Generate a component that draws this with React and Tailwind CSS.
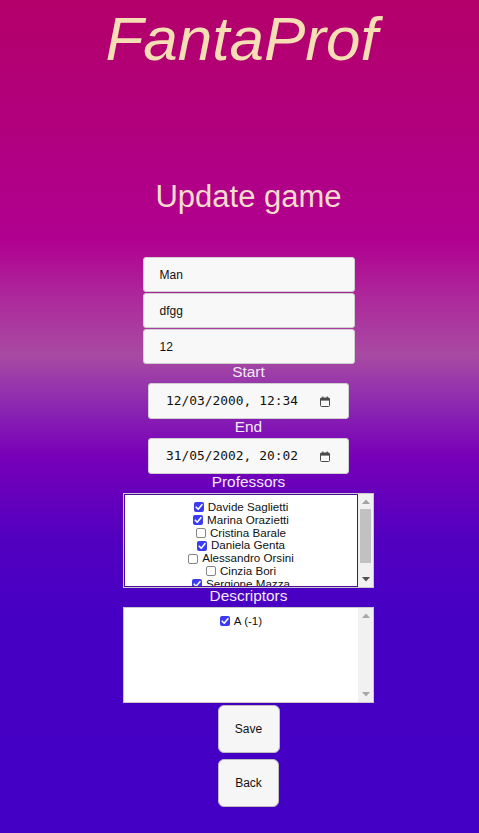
import React from "react";

const professors = [
  { name: "Davide Saglietti", checked: true },
  { name: "Marina Orazietti", checked: true },
  { name: "Cristina Barale", checked: false },
  { name: "Daniela Genta", checked: true },
  { name: "Alessandro Orsini", checked: false },
  { name: "Cinzia Bori", checked: false },
  { name: "Sergione Mazza", checked: true },
];

function Check({ checked }) {
  if (checked) {
    return (
      <span className="inline-flex w-[10px] h-[10px] rounded-[2px] bg-[#3b3bf2] items-center justify-center mr-[4px] shrink-0">
        <svg width="10" height="10" viewBox="0 0 10 10">
          <path d="M2.2 5.2 L4.2 7.2 L7.9 2.7" fill="none" stroke="#fff" strokeWidth="1.6" strokeLinecap="round" strokeLinejoin="round" />
        </svg>
      </span>
    );
  }
  return <span className="inline-block w-[10px] h-[10px] rounded-[2px] border border-[#858585] bg-white mr-[4px] shrink-0" />;
}

function Row({ name, checked }) {
  return (
    <div className="flex items-center justify-center h-[12.8px] text-[11.6px] leading-[12.8px] text-[#111]">
      <Check checked={checked} />
      <span>{name}</span>
    </div>
  );
}

function Arrow({ up, color }) {
  return (
    <svg width="8" height="5" viewBox="0 0 8 5">
      {up ? <path d="M0 5 L4 0.5 L8 5 Z" fill={color} /> : <path d="M0 0 L8 0 L4 4.5 Z" fill={color} />}
    </svg>
  );
}

function Scrollbar({ thumb, upColor, downColor }) {
  return (
    <div className="w-[15px] shrink-0 bg-[#f1f1f1] flex flex-col items-center">
      <div className="h-[15px] flex items-center justify-center">
        <Arrow up color={upColor} />
      </div>
      <div className="flex-1 w-full px-[2px]">
        {thumb && <div className="w-full h-[54px] bg-[#c1c1c1]" />}
      </div>
      <div className="h-[15px] flex items-center justify-center">
        <Arrow color={downColor} />
      </div>
    </div>
  );
}

function CalendarIcon() {
  return (
    <svg width="10" height="11" viewBox="0 0 10 11">
      <rect x="0.5" y="2" width="9" height="8.5" rx="1" fill="none" stroke="#4a4a4a" strokeWidth="1" />
      <rect x="0.5" y="2" width="9" height="2.6" fill="#4a4a4a" />
      <rect x="2.2" y="0.5" width="1.2" height="2" fill="#4a4a4a" />
      <rect x="6.6" y="0.5" width="1.2" height="2" fill="#4a4a4a" />
    </svg>
  );
}

function DateField({ value }) {
  return (
    <div className="w-[201px] h-[36px] mt-[3px] bg-[#f8f8f8] border border-[#cfcfcf] rounded-[3px] flex items-center pl-[17px] pr-[18px]">
      <span className="font-['DejaVu_Sans_Mono',monospace] text-[12.9px] text-[#111] flex-1 whitespace-pre">{value}</span>
      <CalendarIcon />
    </div>
  );
}

function TextField({ value, first }) {
  return (
    <div className={`w-[212px] h-[35px] ${first ? "" : "mt-[1px]"} bg-[#f8f8f8] border border-[#cfcfcf] rounded-[3px] flex items-center px-4 text-[12px] text-[#111]`}>
      {value}
    </div>
  );
}

function Label({ children }) {
  return <div className="text-[15.4px] leading-[16px] h-[16px] text-[#f4e9f6]">{children}</div>;
}

export default function App() {
  return (
    <div className="min-h-screen w-full font-['Liberation_Sans',Arial,sans-serif] bg-[linear-gradient(to_bottom,#b3006a_0px,#b00090_240px,#ad2a9c_300px,#a84aa2_355px,#8e2cb0_400px,#7800b8_455px,#5200c0_540px,#4600c4_620px,#4400c4_833px)] flex flex-col items-center">
      <h1 className="pt-[3px] pl-[4px] text-[62px] leading-[72px] italic text-[#f5deb3]">FantaProf</h1>
      <div className="w-full pl-[18px] flex flex-col items-center">
        <h2 className="mt-[104px] text-[31px] leading-[36px] text-[#f3dccb]">Update game</h2>
        <div className="mt-[42px] flex flex-col items-center">
          <TextField value="Man" first />
          <TextField value="dfgg" />
          <TextField value="12" />
          <Label>Start</Label>
          <DateField value="12/03/2000, 12:34" />
          <Label>End</Label>
          <DateField value="31/05/2002, 20:02" />
          <Label>Professors</Label>
          <div className="mt-[3px] w-[251px] h-[95px] bg-white border border-[#c9c9c9] flex overflow-hidden">
            <div className="flex-1 border border-[#4d0c9c] pt-[6px] overflow-hidden">
              {professors.map((p) => (
                <Row key={p.name} name={p.name} checked={p.checked} />
              ))}
            </div>
            <Scrollbar thumb upColor="#a3a3a3" downColor="#505050" />
          </div>
          <Label>Descriptors</Label>
          <div className="mt-[3px] w-[251px] h-[96px] bg-white border border-[#c9c9c9] flex overflow-hidden">
            <div className="flex-1 pt-[7px]">
              <Row name="A (-1)" checked />
            </div>
            <Scrollbar upColor="#a8a8a8" downColor="#a8a8a8" />
          </div>
          <button className="mt-[2px] w-[62px] h-[48px] bg-[#f6f6f6] border border-[#bdbdbd] rounded-[6px] text-[12px] text-[#111]">Save</button>
          <button className="mt-[6px] w-[61px] h-[48px] bg-[#f6f6f6] border border-[#bdbdbd] rounded-[6px] text-[12px] text-[#111]">Back</button>
        </div>
      </div>
    </div>
  );
}
